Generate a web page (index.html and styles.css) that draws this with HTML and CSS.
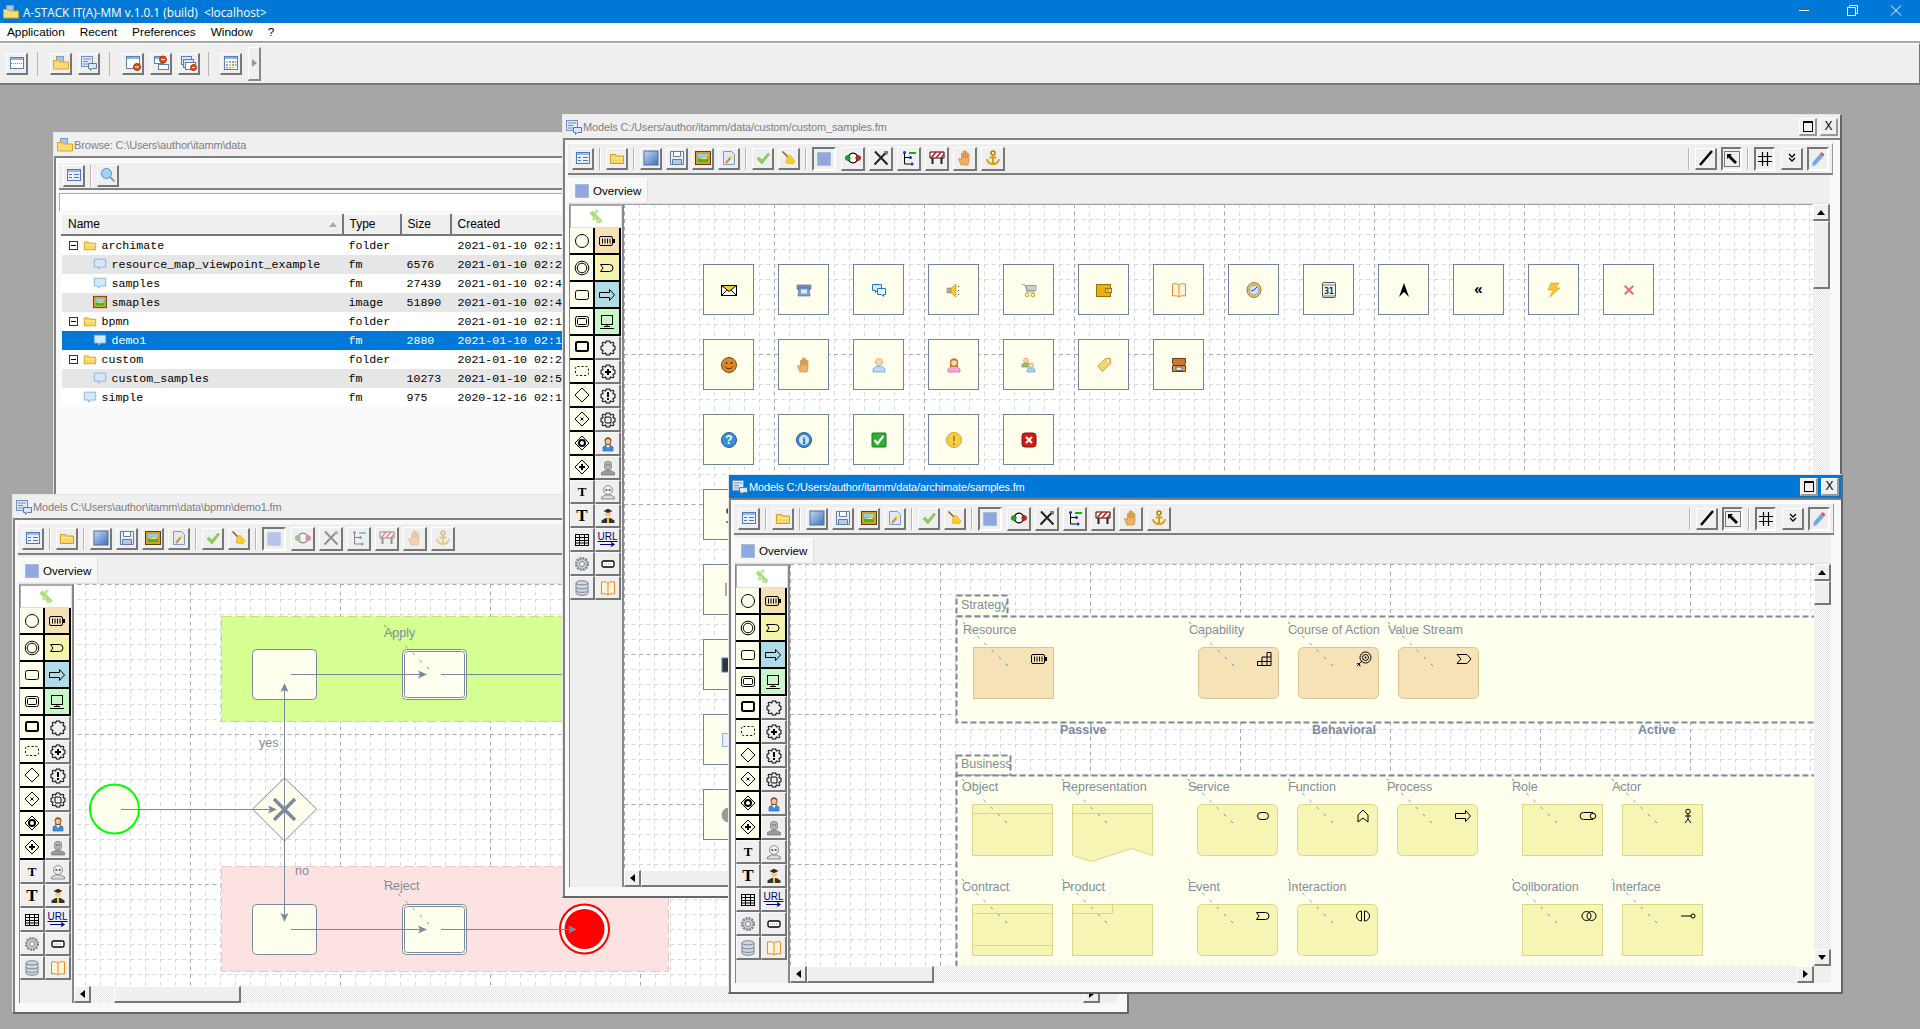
FILE: index.html
```html
<!DOCTYPE html>
<html lang="en">
<head>
<meta charset="utf-8">
<title>A-STACK IT(A)-MM</title>
<link rel="stylesheet" href="styles.css">
</head>
<body>
<svg class="defs" aria-hidden="true">
<defs>
<linearGradient id="bluegrad" x1="0" y1="0" x2="1" y2="1"><stop offset="0" stop-color="#c5d9f5"/><stop offset="1" stop-color="#3b72b8"/></linearGradient>
<pattern id="grid" patternUnits="userSpaceOnUse" width="150" height="150">
<g class="minor"><path d="M15.5 0v150M30.5 0v150M45.5 0v150M60.5 0v150M75.5 0v150M90.5 0v150M105.5 0v150M120.5 0v150M135.5 0v150"/><path d="M0 15.5h150M0 30.5h150M0 45.5h150M0 60.5h150M0 75.5h150M0 90.5h150M0 105.5h150M0 120.5h150M0 135.5h150"/></g>
<g class="major"><path d="M.5 0v150M0 .5h150"/></g>
</pattern>
<pattern id="grid-b" href="#grid" x="116"/>

<symbol id="t-win" viewBox="0 0 16 16"><rect x="1.500" y="2.500" width="13" height="11" fill="#fff" stroke="#5a7fb8"/><rect x="2" y="3" width="12" height="2" fill="#8fb0e0"/><path d="M2 8.500h12" stroke="#888" stroke-dasharray="1 1"/></symbol>
<symbol id="t-open" viewBox="0 0 16 16"><rect x="3.500" y="1.500" width="7" height="7" fill="#a9c4e8" stroke="#7f9bc5"/><path d="M.5 5.500h5l1 1.500h9v7h-15z" fill="#f8dc7a" stroke="#d9a520"/></symbol>
<symbol id="t-winb" viewBox="0 0 16 16"><rect x=".5" y="1.500" width="11" height="10" fill="#dfe8f5" stroke="#6f8fbf"/><path d="M2 4h8M2 6.500h5M2 9h5" stroke="#6f8fbf"/><path d="M7.500 8.500h8v5h-4l-2 2v-2h-2z" fill="#d6e8fb" stroke="#5b7c9e"/></symbol>
<symbol id="t-new1" viewBox="0 0 16 16"><rect x="1.500" y="1.500" width="13" height="12" fill="#fff" stroke="#5a7fb8"/><rect x="2" y="2" width="12" height="2" fill="#8fb0e0"/><circle cx="12" cy="12" r="3.500" fill="#d8531a" stroke="#9a3a10"/><path d="M10 12h4" stroke="#fff"/></symbol>
<symbol id="t-new2" viewBox="0 0 16 16"><rect x="1.500" y="1.500" width="9" height="7" fill="#fff" stroke="#5a7fb8"/><rect x="2" y="2" width="8" height="2" fill="#8fb0e0"/><rect x="5.500" y="9.500" width="10" height="5" fill="#fff" stroke="#5a7fb8"/><circle cx="10" cy="4.500" r="3.500" fill="#d8531a" stroke="#9a3a10"/><path d="M8 4.500h4" stroke="#fff"/></symbol>
<symbol id="t-new3" viewBox="0 0 16 16"><rect x=".5" y="1.500" width="10" height="8" fill="#dde7f5" stroke="#5a7fb8"/><rect x="2.500" y="4.500" width="10" height="8" fill="#dde7f5" stroke="#5a7fb8"/><rect x="4.500" y="7.500" width="10" height="7" fill="#fff" stroke="#5a7fb8"/><circle cx="12.500" cy="12.500" r="3" fill="#d8531a" stroke="#9a3a10"/><path d="M11 12.500h3" stroke="#fff"/></symbol>
<symbol id="t-cal" viewBox="0 0 16 16"><rect x="1.500" y="1.500" width="13" height="13" fill="#fff" stroke="#5a7fb8"/><rect x="2" y="2" width="12" height="2" fill="#8fb0e0"/><path d="M3 6h2v2H3z" fill="#e5c85a"/><path d="M6 6h2v2H6z" fill="#7fbf7f"/><path d="M9 6h2v2H9z" fill="#7fa7e5"/><path d="M12 6h1.500v2H12z" fill="#d89a5a"/><path d="M3 9h2v2H3z" fill="#7fa7e5"/><path d="M6 9h2v2H6z" fill="#e5c85a"/><path d="M9 9h2v2H9z" fill="#8fbf5f"/><path d="M12 9h1.500v2H12z" fill="#7fa7e5"/><path d="M3 12h2v1.500H3z" fill="#e57f7f"/><path d="M6 12h2v1.500H6z" fill="#7fbf7f"/><path d="M9 12h2v1.500H9z" fill="#e5c85a"/></symbol>
<symbol id="t-list" viewBox="0 0 16 16"><rect x="1.500" y="2.500" width="13" height="11" fill="#eaf1fb" stroke="#4f78bb"/><rect x="2" y="3" width="12" height="2" fill="#9fbbe5"/><path d="M3 7.500h3M8 7.500h5M3 10.500h3M8 10.500h5" stroke="#4f78bb"/></symbol>
<symbol id="t-search" viewBox="0 0 16 16"><circle cx="6.500" cy="6.500" r="5" fill="#a9d0f5" stroke="#4a90d0"/><path d="M10 10l4.500 4.500" stroke="#999" stroke-width="2"/></symbol>
<symbol id="t-folder" viewBox="0 0 16 16"><path d="M1.500 4.500h5l1 1.500h7v7.500h-13z" fill="#f8d860" stroke="#cf9c20"/><path d="M2 8h12" stroke="#fff2b0"/></symbol>
<symbol id="t-disk" viewBox="0 0 16 16"><rect x="1" y="1" width="14" height="14" fill="url(#bluegrad)" stroke="#4a6f9e"/></symbol>
<symbol id="t-floppy" viewBox="0 0 16 16"><path d="M1.500 1.500h13v13h-13z" fill="#e8eff8" stroke="#5a7fa8"/><path d="M4.500 1.500h7v5h-7z" fill="#fff" stroke="#5a7fa8"/><path d="M3.500 9.500h9v5h-9z" fill="#b7cbe5" stroke="#5a7fa8"/></symbol>
<symbol id="t-img" viewBox="0 0 16 16"><rect x=".5" y="1.500" width="15" height="13" fill="#d8a020" stroke="#5a4008"/><rect x="3" y="4" width="10" height="8" fill="#8fd0f0"/><path d="M3 9l3-2 3 2 4-2v5H3z" fill="#4caf30"/><path d="M5 8h7v1H5z" fill="#ffe65a"/></symbol>
<symbol id="t-wand" viewBox="0 0 16 16"><path d="M2.500 1.500h8l3 3v10h-11z" fill="#dfe9f7" stroke="#7f9bc5"/><path d="M5 13L10 7" stroke="#c8923a" stroke-width="2"/><path d="M10.500 4.500l1 1.500 1.500-.5-1 1.500.5 1.500-1.500-.5-1 1-.5-1.500-1.500-.5 1.500-1z" fill="#ffe060"/></symbol>
<symbol id="t-check" viewBox="0 0 16 16"><path d="M2 9l2-2 3 3 6-7 1.500 1.500L7 14z" fill="#8fcf5a" stroke="#6fae40" stroke-width=".5"/></symbol>
<symbol id="t-broom" viewBox="0 0 16 16"><path d="M1.500 1.500l6 6" stroke="#8a5a20" stroke-width="1.500"/><path d="M6 7l3-2 5 6-2 3-7-1z" fill="#f5cf2a" stroke="#c89f10" stroke-width=".5"/></symbol>
<symbol id="t-sel" viewBox="0 0 16 16"><rect x="1.500" y="1.500" width="13" height="13" fill="#8fa9e0" stroke="#a9bcd5"/></symbol>
<symbol id="t-seld" viewBox="0 0 16 16"><rect x="1.500" y="1.500" width="13" height="13" fill="#b7c5ec" stroke="#b0bfd8" stroke-dasharray="1 1"/></symbol>
<symbol id="t-ring" viewBox="0 0 16 16"><circle cx="8" cy="8" r="4.800" fill="#fff" stroke="#000" stroke-width="1.300"/><circle cx="2.800" cy="8" r="2.500" fill="#1fa81f" stroke="#0c5a0c" stroke-width=".5"/><circle cx="13.200" cy="8" r="2.500" fill="#d02020" stroke="#701010" stroke-width=".5"/></symbol>
<symbol id="t-tools" viewBox="0 0 16 16"><path d="M2 1.500l12.500 13M14 1.500L1.500 14.500" stroke="#222" stroke-width="2"/><path d="M11 1h4v3l-2 1z" fill="#778"/></symbol>
<symbol id="t-tree" viewBox="0 0 16 16"><path d="M3.500 2v12h6M3.500 7.500h6" stroke="#000" fill="none"/><circle cx="3.500" cy="2.500" r="1.500" fill="#1030c0"/><circle cx="9.500" cy="7.500" r="1.500" fill="#1030c0"/><circle cx="11" cy="14" r="1.500" fill="#1030c0"/><path d="M8 2h7v2H8z" fill="#10b020"/></symbol>
<symbol id="t-barrier" viewBox="0 0 16 16"><path d="M1 2h14v6H1z" fill="#fff" stroke="#300"/><path d="M1 8l5-6h2L3 8zM6 8l5-6h2L8 8zM11 8l4-5v2l-2 3z" fill="#e01010"/><path d="M3.500 8v6M12.500 8v6" stroke="#222" stroke-width="2"/></symbol>
<symbol id="t-hand" viewBox="0 0 16 16"><path d="M4 15L1.500 9l1-1 2 2V3.500L6 3v5h.5V1L8 .8V8h.5V1.500L10 2v6h.5V3.500l1.500.3V11l-1 4z" fill="#f0b060" stroke="#c08030" stroke-width=".6"/></symbol>
<symbol id="t-anchor" viewBox="0 0 16 16"><circle cx="8" cy="3" r="2" fill="none" stroke="#b08000" stroke-width="1.500"/><path d="M8 5v9M4.500 7.500h7M2 9c0 3 3 5 6 5s6-2 6-5" fill="none" stroke="#d8a010" stroke-width="2"/></symbol>
<symbol id="t-line" viewBox="0 0 16 16"><path d="M2 15L14 1" stroke="#000" stroke-width="2.500"/></symbol>
<symbol id="t-resize" viewBox="0 0 16 16"><rect x=".5" y=".5" width="15" height="15" fill="none" stroke="#000" stroke-dasharray="1 1"/><path d="M3 3h5l-1.500 1.500L13 11l-2 2-6.500-6.500L3 8z"/></symbol>
<symbol id="t-hash" viewBox="0 0 16 16"><path d="M5.500 1v14M10.500 1v14M1 5.500h14M1 10.500h14" stroke="#000" stroke-width="1.200"/></symbol>
<symbol id="t-chev" viewBox="0 0 16 16"><path d="M5 4l3 3 3-3M5 8l3 3 3-3" fill="none" stroke="#000" stroke-width="1.300"/></symbol>
<symbol id="t-pencil" viewBox="0 0 16 16"><path d="M3 11l7-8 3 2.500-7 8L2.500 15z" fill="#6fa8e8" stroke="#8fb6e0" stroke-width=".6"/><path d="M10 3l1.500-2 3 2.500L13 5.500z" fill="#e05050"/></symbol>
<symbol id="t-bubble" viewBox="0 0 16 16"><path d="M1.500 2.500h13v9h-6l-2 2.500v-2.500h-5z" fill="#d3e8fa" stroke="#7fb0d8"/></symbol>
<symbol id="t-link" viewBox="0 0 16 16"><path d="M3 3l10 10" stroke="#a8dc78" stroke-width="4"/><path d="M4.500 11l3.500-3.500M8.500 13.500l3-3M7 4l3-3" stroke="#bfe898" stroke-width="3"/></symbol>

<symbol id="p-c" viewBox="0 0 16 16"><circle cx="8" cy="8" r="6.500" fill="none" stroke="#000"/></symbol>
<symbol id="p-cc" viewBox="0 0 16 16"><circle cx="8" cy="8" r="6.800" fill="none" stroke="#000"/><circle cx="8" cy="8" r="4.800" fill="none" stroke="#000"/></symbol>
<symbol id="p-r" viewBox="0 0 16 16"><rect x="1.500" y="3.500" width="13" height="9" rx="2" fill="none" stroke="#000"/></symbol>
<symbol id="p-rr" viewBox="0 0 16 16"><rect x="1.500" y="2.500" width="13" height="10" rx="2" fill="none" stroke="#000"/><rect x="3.500" y="4.500" width="9" height="6" rx="1" fill="none" stroke="#000"/></symbol>
<symbol id="p-rt" viewBox="0 0 16 16"><rect x="2" y="3" width="12" height="9" rx="1.500" fill="none" stroke="#000" stroke-width="2"/></symbol>
<symbol id="p-rd" viewBox="0 0 16 16"><rect x="1.500" y="3.500" width="13" height="9" rx="2" fill="none" stroke="#000" stroke-dasharray="2 2"/></symbol>
<symbol id="p-d" viewBox="0 0 16 16"><path d="M8 1l7 7-7 7-7-7z" fill="none" stroke="#000"/></symbol>
<symbol id="p-dx" viewBox="0 0 16 16"><path d="M8 1l7 7-7 7-7-7z" fill="none" stroke="#000"/><path d="M6.500 6.500l3 3M9.500 6.500l-3 3" stroke="#000"/></symbol>
<symbol id="p-do" viewBox="0 0 16 16"><path d="M8 1l7 7-7 7-7-7z" fill="none" stroke="#000"/><circle cx="8" cy="8" r="3" fill="none" stroke="#000" stroke-width="2"/></symbol>
<symbol id="p-dp" viewBox="0 0 16 16"><path d="M8 1l7 7-7 7-7-7z" fill="none" stroke="#000"/><path d="M5 8h6M8 5v6" stroke="#000" stroke-width="2"/></symbol>
<symbol id="p-bat" viewBox="0 0 16 16"><rect x=".5" y="3.500" width="13" height="9" rx="1.500" fill="none" stroke="#000"/><path d="M14 6h2v4h-2z"/><path d="M3.500 5.500v5M6 5.500v5M8.500 5.500v5M11 5.500v5" stroke="#000"/></symbol>
<symbol id="p-evt" viewBox="0 0 16 16"><path d="M1.500 4.500h9a3.500 3.500 0 0 1 0 7h-9l2.500-3.500z" fill="none" stroke="#000"/></symbol>
<symbol id="p-arr" viewBox="0 0 16 16"><path d="M.5 5.500h10v-3l5 5.500-5 5.500v-3h-10z" fill="none" stroke="#000"/></symbol>
<symbol id="p-pc" viewBox="0 0 16 16"><rect x="2.500" y="1.500" width="11" height="9" fill="none" stroke="#000"/><path d="M8 10.500v2M1 14.500h14M5 12.500h6" stroke="#000"/></symbol>
<symbol id="p-g" viewBox="0 0 16 16"><path d="M6 1h4v2h1l2-1 1 1-1 2v1h2v4h-2v1l1 2-1 1-2-1h-1v2H6v-2H5l-2 1-1-1 1-2v-1H1V6h2V5L2 3l1-1 2 1h1z" fill="none" stroke="#000"/></symbol>
<symbol id="p-gp" viewBox="0 0 16 16"><path d="M6 1h4v2h1l2-1 1 1-1 2v1h2v4h-2v1l1 2-1 1-2-1h-1v2H6v-2H5l-2 1-1-1 1-2v-1H1V6h2V5L2 3l1-1 2 1h1z" fill="none" stroke="#000"/><path d="M5 8h6M8 5v6" stroke="#000" stroke-width="2"/></symbol>
<symbol id="p-ge" viewBox="0 0 16 16"><path d="M6 1h4v2h1l2-1 1 1-1 2v1h2v4h-2v1l1 2-1 1-2-1h-1v2H6v-2H5l-2 1-1-1 1-2v-1H1V6h2V5L2 3l1-1 2 1h1z" fill="none" stroke="#000"/><path d="M8 4v5M8 10v2" stroke="#000" stroke-width="2"/></symbol>
<symbol id="p-gz" viewBox="0 0 16 16"><path d="M6 1h4v2h1l2-1 1 1-1 2v1h2v4h-2v1l1 2-1 1-2-1h-1v2H6v-2H5l-2 1-1-1 1-2v-1H1V6h2V5L2 3l1-1 2 1h1z" fill="none" stroke="#000"/><path d="M5 5h5l1 1v5H6l-1-1z" fill="none" stroke="#000"/></symbol>
<symbol id="p-fem" viewBox="0 0 16 16"><path d="M3 15v-4l3-2h4l3 2v4z" fill="#3f8fe0" stroke="#245a9a" stroke-width=".6"/><path d="M6 9h4l-2 3z" fill="#fff"/><path d="M4.500 5c0-5 7-5 7 0l-1 4h-5z" fill="#8a4a1f"/><circle cx="8" cy="5.500" r="2.500" fill="#f4c69a"/></symbol>
<symbol id="p-rob" viewBox="0 0 16 16"><path d="M1.500 15v-2.500l4-2h5l4 2V15z" fill="#9a9a9a" stroke="#666" stroke-width=".6"/><rect x="4.500" y="1.500" width="7" height="8" rx="2.500" fill="#b5b5b5" stroke="#666" stroke-width=".6"/><path d="M6 5h1.500M8.500 5H10" stroke="#555"/></symbol>
<symbol id="p-sku" viewBox="0 0 16 16"><path d="M1.500 15v-2l4-2h5l4 2v2z" fill="#ddd" stroke="#666" stroke-width=".7"/><circle cx="8" cy="6" r="4.500" fill="#eee" stroke="#666" stroke-width=".7"/><circle cx="6.300" cy="6" r="1.100" fill="#555"/><circle cx="9.700" cy="6" r="1.100" fill="#555"/></symbol>
<symbol id="p-off" viewBox="0 0 16 16"><path d="M1.500 15v-2.500l4-2.500h5l4 2.500V15z" fill="#333"/><path d="M7 10h2v5H7z" fill="#eec040"/><circle cx="8" cy="6" r="3" fill="#f4c69a"/><path d="M3.500 3L8 .8 12.500 3 8 5z" fill="#3a2a10"/></symbol>
<symbol id="p-tbl" viewBox="0 0 16 16"><rect x="1.500" y="2.500" width="13" height="11" fill="none" stroke="#000"/><path d="M1.500 5.500h13M1.500 8.500h13M1.500 11h13M5.500 2.500v11M10.500 2.500v11" stroke="#000"/></symbol>
<symbol id="p-pill" viewBox="0 0 16 16"><rect x="2" y="5" width="12" height="6" rx="1.500" fill="#fff" stroke="#000" stroke-width="1.300"/><path d="M4 8h8" stroke="#999" stroke-dasharray="1 1"/></symbol>
<symbol id="p-cog" viewBox="0 0 16 16"><circle cx="8" cy="8" r="5.800" fill="#ccd0d6" stroke="#7f8590" stroke-width="2.500" stroke-dasharray="2 1"/><circle cx="8" cy="8" r="2.500" fill="#f2f2f2" stroke="#7f8590"/></symbol>
<symbol id="p-db" viewBox="0 0 16 16"><path d="M2 3c0-3 12-3 12 0v10c0 3-12 3-12 0z" fill="#cdd8e4" stroke="#7f8590"/><path d="M2 3c0 2.500 12 2.500 12 0M2 7c0 2.500 12 2.500 12 0M2 10.500c0 2.500 12 2.500 12 0" fill="none" stroke="#7f8590"/></symbol>
<symbol id="p-book" viewBox="0 0 16 16"><path d="M8 3C6.500 1.500 3 1.500 1.500 2v12c1.500-.5 5-.5 6.500 1 1.500-1.500 5-1.500 6.500-1V2C13 1.500 9.500 1.500 8 3zM8 3v12" fill="#fff3dc" stroke="#e08f20"/></symbol>
<symbol id="p-arrowline" viewBox="0 0 16 5"><path d="M0 2.500h14M11 .5l3 2-3 2" fill="none" stroke="#000080" stroke-width="1.200"/></symbol>

<symbol id="c-env" viewBox="0 0 16 16"><rect x=".5" y="3.500" width="15" height="10" fill="#fff" stroke="#000"/><path d="M.5 3.500L8 9.500l7.500-6z" fill="#f5c92e" stroke="#000"/><path d="M.5 13.500L6 8M15.500 13.500L10 8" stroke="#000"/></symbol>
<symbol id="c-tel" viewBox="0 0 16 16"><path d="M1 3h14v4l-2 1V6H3v2L1 7z" fill="#6e93bf" stroke="#456a96" stroke-width=".6"/><path d="M3 6h10l1 8H2z" fill="#7ca0c8" stroke="#456a96" stroke-width=".6"/><rect x="5" y="7.500" width="6" height="4" fill="#dfe9f5"/></symbol>
<symbol id="c-spk" viewBox="0 0 16 16"><path d="M1.500 2.500h9v6h-4l-2 2v-2h-3z" fill="#d5eafc" stroke="#1d78c8"/><path d="M6.500 6.500h8v6h-2v2l-2-2h-4z" fill="#eef7ff" stroke="#1d78c8"/></symbol>
<symbol id="c-snd" viewBox="0 0 16 16"><path d="M1 6h4v5H1z" fill="#aaa" stroke="#777" stroke-width=".5"/><path d="M5 6l5-4v13l-5-4z" fill="#f8c830" stroke="#b88a10" stroke-width=".6"/><path d="M12.500 4v1M12.500 8v1M12.500 12v1" stroke="#333"/></symbol>
<symbol id="c-cart" viewBox="0 0 16 16"><path d="M1 2l3 1 2 7h8" fill="none" stroke="#999"/><path d="M5 3.500h10v5H6.500z" fill="#f3f3f3" stroke="#999"/><path d="M7 4v4M9 4v4M11 4v4M13 4v4" stroke="#aaa"/><circle cx="6" cy="13" r="1.800" fill="#fff3c0" stroke="#d8a010"/><circle cx="12" cy="13" r="1.800" fill="#fff3c0" stroke="#d8a010"/></symbol>
<symbol id="c-wal" viewBox="0 0 16 16"><rect x=".5" y="2.500" width="14" height="12" fill="#e9b010" stroke="#9a7205"/><rect x="9.500" y="6.500" width="6" height="4" fill="#f7d050" stroke="#9a7205"/><circle cx="12" cy="8.500" r=".8" fill="#9a7205"/></symbol>
<symbol id="c-clk" viewBox="0 0 16 16"><ellipse cx="8" cy="8" rx="7" ry="7.400" fill="#f3d070" stroke="#a86e10"/><circle cx="8" cy="8" r="5" fill="#cfe0ff" stroke="#7a90c0"/><path d="M8 8l3-3M8 8l-3 1" stroke="#345"/></symbol>
<symbol id="c-cal" viewBox="0 0 16 16"><rect x="1.500" y=".5" width="13" height="15" rx="1" fill="#eee" stroke="#555"/><path d="M2 3h12M2 14h12" stroke="#888"/><text x="8" y="11.500" class="cal-t">31</text></symbol>
<symbol id="c-head" viewBox="0 0 16 16"><path d="M8 1l5 14-5-5-5 5z"/></symbol>
<symbol id="c-bolt" viewBox="0 0 16 16"><path d="M5 1h8l-3 5h4L4 15l3-7H2z" fill="#f5c83a" stroke="#d8a520" stroke-width=".7"/></symbol>
<symbol id="c-x" viewBox="0 0 16 16"><path d="M3 4.500L4.500 3 8 6.500 11.500 3 13 4.500 9.500 8l3.500 3.500-1.500 1.500L8 9.500 4.500 13 3 11.500 6.500 8z" fill="#e87070"/></symbol>
<symbol id="c-smile" viewBox="0 0 16 16"><circle cx="8" cy="8" r="7.500" fill="#e2862a" stroke="#7a4510"/><circle cx="5.500" cy="6" r="1" fill="#432"/><circle cx="10.500" cy="6" r="1" fill="#432"/><path d="M4 9.500c2 3 6 3 8 0" fill="none" stroke="#432"/></symbol>
<symbol id="c-user" viewBox="0 0 16 16"><path d="M2 15v-3l3-2.500h6l3 2.500v3z" fill="#bcdcfc" stroke="#5a9ad8" stroke-width=".7"/><circle cx="8" cy="5" r="3.500" fill="#fad7a8" stroke="#d8a060" stroke-width=".7"/></symbol>
<symbol id="c-wom" viewBox="0 0 16 16"><path d="M2 15v-3l3-2.500h6l3 2.500v3z" fill="#f6a8d8" stroke="#d060a0" stroke-width=".7"/><path d="M4 10V5c0-5 8-5 8 0v5z" fill="#bf7a30"/><circle cx="8" cy="6" r="2.800" fill="#fad7a8"/></symbol>
<symbol id="c-grp" viewBox="0 0 16 16"><path d="M1 10V7.500L3 6h4l2 1.500V10z" fill="#8bc870" stroke="#4f9040" stroke-width=".6"/><circle cx="5" cy="3.500" r="2.500" fill="#fad7a8" stroke="#c89060" stroke-width=".6"/><path d="M6 15v-2.500L8 11h4l2 1.500V15z" fill="#a8d0f8" stroke="#5a9ad8" stroke-width=".6"/><circle cx="10" cy="8.500" r="2.500" fill="#fad7a8" stroke="#c89060" stroke-width=".6"/></symbol>
<symbol id="c-tag" viewBox="0 0 16 16"><path d="M1.500 9l8-7.500h5v5L6.500 14.500z" fill="#f5d470" stroke="#d8a530"/><circle cx="12" cy="4" r="1" fill="#fff"/></symbol>
<symbol id="c-chest" viewBox="0 0 16 16"><path d="M1.500 1.500h13v5l-2 2h-9l-2-2z" fill="#c87a30" stroke="#6a3a10"/><path d="M1.500 8.500h13v6h-13z" fill="#e09a50" stroke="#6a3a10"/><rect x="5" y="10" width="6" height="3.500" fill="#e8e8e8" stroke="#666"/></symbol>
<symbol id="c-q" viewBox="0 0 16 16"><circle cx="8" cy="8" r="7.500" fill="#3d8ed8" stroke="#1f5a96"/><text x="8" y="12.200" class="badge-t">?</text></symbol>
<symbol id="c-i" viewBox="0 0 16 16"><circle cx="8" cy="8" r="7.500" fill="#3d8ed8" stroke="#1f5a96"/><circle cx="8" cy="8" r="5" fill="#cfe6fb"/><text x="8" y="12" class="badge-i">i</text></symbol>
<symbol id="c-ok" viewBox="0 0 16 16"><rect x="1" y="1" width="14" height="14" rx="1" fill="#30b030" stroke="#1a7a1a"/><path d="M3.500 8l3 3.500L12.500 4" fill="none" stroke="#fff" stroke-width="2.200"/></symbol>
<symbol id="c-warn" viewBox="0 0 16 16"><circle cx="8" cy="8" r="7.500" fill="#f8d048" stroke="#d8a020"/><path d="M8 3.500v6M8 11v2" stroke="#d08010" stroke-width="2"/></symbol>
<symbol id="c-err" viewBox="0 0 16 16"><rect x="1" y="1" width="14" height="14" rx="3" fill="#d81818" stroke="#801010"/><path d="M5 5l6 6M11 5l-6 6" stroke="#fff" stroke-width="2"/></symbol>
<symbol id="c-pin" viewBox="0 0 16 16"><circle cx="8" cy="4" r="3" fill="#555"/><path d="M8 7v8M5 15h6" stroke="#000"/></symbol>
<symbol id="c-blk" viewBox="0 0 16 16"><rect x="1" y="1" width="14" height="14" fill="#333" stroke="#5a7fc8"/></symbol>
<symbol id="c-doc" viewBox="0 0 16 16"><rect x="1.500" y="1.500" width="13" height="13" fill="#e8f0fa" stroke="#8fb0d8"/></symbol>
<symbol id="c-ball" viewBox="0 0 16 16"><circle cx="8" cy="8" r="7.500" fill="#999"/></symbol>
<symbol id="c-bar" viewBox="0 0 16 16"><rect x="4" y="1" width="2" height="13" fill="#aaa"/></symbol>

<symbol id="a-stair" viewBox="0 0 16 16"><path d="M11 1.500h4v13H1.500v-4H6V6h5zM6 10.500h9M11 6h4M6 10.500v4M11 6v8.500" fill="none" stroke="#000"/></symbol>
<symbol id="a-target" viewBox="0 0 16 16"><circle cx="9.500" cy="6.500" r="5.500" fill="none" stroke="#000"/><circle cx="9.500" cy="6.500" r="3" fill="none" stroke="#000"/><circle cx="9.500" cy="6.500" r="1"/><path d="M6 10l-5 5M1 12.500L3.500 13 4 15.500" fill="none" stroke="#000"/></symbol>
<symbol id="a-chev" viewBox="0 0 16 16"><path d="M1 3.500h10l4 4.500-4 4.500H1l4-4.500z" fill="none" stroke="#000"/></symbol>
<symbol id="a-pill" viewBox="0 0 16 16"><rect x="2.500" y="4.500" width="11" height="7" rx="3.500" fill="none" stroke="#000"/></symbol>
<symbol id="a-func" viewBox="0 0 16 16"><path d="M8 2l5 5v7l-5-4-5 4V7z" fill="none" stroke="#000"/></symbol>
<symbol id="a-role" viewBox="0 0 16 16"><path d="M13 4.500H3.500a3.500 3.500 0 0 0 0 7H13" fill="none" stroke="#000"/><circle cx="13" cy="8" r="2.800" fill="none" stroke="#000"/></symbol>
<symbol id="a-actor" viewBox="0 0 16 16"><circle cx="8" cy="3.500" r="2.300" fill="none" stroke="#000"/><path d="M8 6v5M5 8h6M5 15l3-4 3 4" fill="none" stroke="#000"/></symbol>
<symbol id="a-int" viewBox="0 0 16 16"><path d="M6.500 3a5 5 0 0 0 0 10zM9.500 3a5 5 0 0 1 0 10z" fill="none" stroke="#000"/></symbol>
<symbol id="a-coll" viewBox="0 0 16 16"><circle cx="5.500" cy="8" r="4.500" fill="none" stroke="#000"/><circle cx="10.500" cy="8" r="4.500" fill="none" stroke="#000"/></symbol>
<symbol id="a-iface" viewBox="0 0 16 16"><path d="M1 8h10" stroke="#000"/><circle cx="13" cy="8" r="2" fill="none" stroke="#000"/></symbol>
</defs>
</svg>

<header class="app-title">
<svg class="ic app-logo"><use href="#t-open"/></svg>
<span class="app-name">A-STACK IT(A)-MM v.1.0.1 (build)&nbsp; &lt;localhost&gt;</span>
<span class="sys"><svg viewBox="0 0 46 23"><path d="M18 10.500h10" stroke="#fff"/></svg></span>
<span class="sys"><svg viewBox="0 0 46 23"><path d="M20.500 7.500h8v8h-8zM22.500 7.500v-2h8v8h-2" fill="none" stroke="#fff"/></svg></span>
<span class="sys"><svg viewBox="0 0 46 23"><path d="M18 5.500l10 10M28 5.500l-10 10" stroke="#fff"/></svg></span>
</header>
<nav class="menu"><span>Application</span><span>Recent</span><span>Preferences</span><span>Window</span><span>?</span></nav>
<div class="main-tb">
<span class="btn"><svg class="ic"><use href="#t-win"/></svg></span><i class="sep sep-a"></i>
<span class="btn"><svg class="ic"><use href="#t-open"/></svg></span>
<span class="btn"><svg class="ic"><use href="#t-winb"/></svg></span><i class="sep sep-a"></i>
<span class="btn"><svg class="ic"><use href="#t-new1"/></svg></span>
<span class="btn"><svg class="ic"><use href="#t-new2"/></svg></span>
<span class="btn"><svg class="ic"><use href="#t-new3"/></svg></span><i class="sep sep-b"></i>
<span class="btn"><svg class="ic"><use href="#t-cal"/></svg></span>
<span class="grip"><i class="tri-r"></i></span>
</div>

<main class="desktop">

<section class="win win-browse">
<div class="win-title"><svg class="ic"><use href="#t-open"/></svg><span>Browse: C:\Users\author\itamm\data</span></div>
<div class="win-body">
<div class="tb tb-browse">
<span class="btn"><svg class="ic"><use href="#t-list"/></svg></span><i class="sep"></i>
<span class="btn"><svg class="ic"><use href="#t-search"/></svg></span>
</div>
<div class="field"></div>
<table class="files">
<colgroup><col class="c-name"><col class="c-type"><col class="c-size"><col class="c-date"></colgroup>
<thead><tr><th><span class="th-name">Name<i class="sort"></i></span></th><th>Type</th><th>Size</th><th>Created</th></tr></thead>
<tbody>
<tr><td><span class="nm lv0"><i class="tog"></i><svg class="fi"><use href="#t-folder"/></svg>archimate</span></td><td>folder</td><td></td><td>2021-01-10 02:1</td></tr>
<tr class="alt"><td><span class="nm lv1"><svg class="fi"><use href="#t-bubble"/></svg>resource_map_viewpoint_example</span></td><td>fm</td><td>6576</td><td>2021-01-10 02:2</td></tr>
<tr><td><span class="nm lv1"><svg class="fi"><use href="#t-bubble"/></svg>samples</span></td><td>fm</td><td>27439</td><td>2021-01-10 02:4</td></tr>
<tr class="alt"><td><span class="nm lv1"><svg class="fi"><use href="#t-img"/></svg>smaples</span></td><td>image</td><td>51890</td><td>2021-01-10 02:4</td></tr>
<tr><td><span class="nm lv0"><i class="tog"></i><svg class="fi"><use href="#t-folder"/></svg>bpmn</span></td><td>folder</td><td></td><td>2021-01-10 02:1</td></tr>
<tr class="sel"><td><span class="nm lv1"><svg class="fi"><use href="#t-bubble"/></svg>demo1</span></td><td>fm</td><td>2880</td><td>2021-01-10 02:1</td></tr>
<tr><td><span class="nm lv0"><i class="tog"></i><svg class="fi"><use href="#t-folder"/></svg>custom</span></td><td>folder</td><td></td><td>2021-01-10 02:2</td></tr>
<tr class="alt"><td><span class="nm lv1"><svg class="fi"><use href="#t-bubble"/></svg>custom_samples</span></td><td>fm</td><td>10273</td><td>2021-01-10 02:5</td></tr>
<tr><td><span class="nm lv2"><svg class="fi"><use href="#t-bubble"/></svg>simple</span></td><td>fm</td><td>975</td><td>2020-12-16 02:1</td></tr>
</tbody>
</table>
</div>
</section>

<section class="win win-bpmn">
<div class="win-title"><svg class="ic"><use href="#t-winb"/></svg><span>Models C:\Users\author\itamm\data\bpmn\demo1.fm</span></div>
<div class="win-body">
<div class="tb">
<span class="btn"><svg class="ic"><use href="#t-list"/></svg></span><i class="sep"></i>
<span class="btn"><svg class="ic"><use href="#t-folder"/></svg></span><i class="sep"></i>
<span class="btn"><svg class="ic"><use href="#t-disk"/></svg></span>
<span class="btn"><svg class="ic"><use href="#t-floppy"/></svg></span>
<span class="btn"><svg class="ic"><use href="#t-img"/></svg></span>
<span class="btn"><svg class="ic"><use href="#t-wand"/></svg></span><i class="sep"></i>
<span class="btn"><svg class="ic"><use href="#t-check"/></svg></span>
<span class="btn"><svg class="ic"><use href="#t-broom"/></svg></span><i class="sep"></i>
<span class="btn btn-on"><svg class="ic"><use href="#t-seld"/></svg></span>
<span class="btn btn-w dim"><svg class="ic"><use href="#t-ring"/></svg></span>
<span class="btn btn-w dim"><svg class="ic"><use href="#t-tools"/></svg></span>
<span class="btn btn-w dim"><svg class="ic"><use href="#t-tree"/></svg></span>
<span class="btn btn-w dim"><svg class="ic"><use href="#t-barrier"/></svg></span>
<span class="btn btn-w dim"><svg class="ic"><use href="#t-hand"/></svg></span>
<span class="btn btn-w dim"><svg class="ic"><use href="#t-anchor"/></svg></span>
</div>
<div class="tabs"><span class="tab"><svg class="ic"><use href="#t-sel"/></svg>Overview</span></div>
<div class="work">
<div class="palette">
<div class="pal-top"><svg class="ic"><use href="#t-link"/></svg></div>
<div class="pal-grid">
<span class="p y"><svg class="ic"><use href="#p-c"/></svg></span><span class="p tan"><svg class="ic"><use href="#p-bat"/></svg></span>
<span class="p y"><svg class="ic"><use href="#p-cc"/></svg></span><span class="p yel"><svg class="ic"><use href="#p-evt"/></svg></span>
<span class="p y"><svg class="ic"><use href="#p-r"/></svg></span><span class="p blu"><svg class="ic"><use href="#p-arr"/></svg></span>
<span class="p y"><svg class="ic"><use href="#p-rr"/></svg></span><span class="p grn"><svg class="ic"><use href="#p-pc"/></svg></span>
<span class="p y"><svg class="ic"><use href="#p-rt"/></svg></span><span class="p"><svg class="ic"><use href="#p-g"/></svg></span>
<span class="p y"><svg class="ic"><use href="#p-rd"/></svg></span><span class="p"><svg class="ic"><use href="#p-gp"/></svg></span>
<span class="p y"><svg class="ic"><use href="#p-d"/></svg></span><span class="p"><svg class="ic"><use href="#p-ge"/></svg></span>
<span class="p y"><svg class="ic"><use href="#p-dx"/></svg></span><span class="p"><svg class="ic"><use href="#p-gz"/></svg></span>
<span class="p y"><svg class="ic"><use href="#p-do"/></svg></span><span class="p"><svg class="ic"><use href="#p-fem"/></svg></span>
<span class="p y"><svg class="ic"><use href="#p-dp"/></svg></span><span class="p"><svg class="ic"><use href="#p-rob"/></svg></span>
<span class="p t-reg">T</span><span class="p"><svg class="ic"><use href="#p-sku"/></svg></span>
<span class="p t-big">T</span><span class="p"><svg class="ic"><use href="#p-off"/></svg></span>
<span class="p"><svg class="ic"><use href="#p-tbl"/></svg></span><span class="p url"><span class="url-t">URL</span><svg class="url-a"><use href="#p-arrowline"/></svg></span>
<span class="p"><svg class="ic"><use href="#p-cog"/></svg></span><span class="p"><svg class="ic"><use href="#p-pill"/></svg></span>
<span class="p"><svg class="ic"><use href="#p-db"/></svg></span><span class="p"><svg class="ic"><use href="#p-book"/></svg></span>
</div>
</div>
<div class="view">
<div class="canvas"><svg class="diagram">
<rect width="100%" height="100%" fill="#fff"/><rect width="100%" height="100%" fill="url(#grid-b)"/>
<g transform="translate(-74 -584)">
<rect class="lane-g" x="221.500" y="616.500" width="447" height="105"/>
<rect class="lane-r" x="221.500" y="866.500" width="447" height="105"/>
<rect class="task" x="252.500" y="649.500" width="64" height="50" rx="4"/>
<rect class="task" x="402.500" y="649.500" width="64" height="50" rx="4"/><rect class="task" x="404.500" y="651.500" width="60" height="46" rx="3"/>
<rect class="task" x="252.500" y="904.500" width="64" height="50" rx="4"/>
<rect class="task" x="402.500" y="904.500" width="64" height="50" rx="4"/><rect class="task" x="404.500" y="906.500" width="60" height="46" rx="3"/>
<circle class="start" cx="114.500" cy="809" r="24.500"/>
<path class="task" d="M284.500 778l32 31-32 32-32-32z"/>
<circle class="end-o" cx="584.500" cy="929" r="24.500"/><circle class="end-i" cx="584.500" cy="929" r="20"/>
<path class="xmark" d="M274 799l21 21M295 799l-21 21"/>
<path class="conn" d="M121 809.500h155M284.500 809V690M284.500 809V915M291 674.500h130M441 674.500h228M291 929.500h130M441 929.500h130"/>
<path class="head" d="M277 809.500l-9-4 2 4-2 4zM284.500 683l-4 9 4-2 4 2zM284.500 922l-4-9 4 2 4-2zM427 674.500l-9-4 2 4-2 4zM427 929.500l-9-4 2 4-2 4zM577 929.500l-9-4 2 4-2 4z"/>
<path class="hint" d="M384 625l45 44M384 880l45 44"/>
<text class="lbl" x="384" y="637">Apply</text><text class="lbl" x="384" y="890">Reject</text>
<text class="lbl" x="259" y="747">yes</text><text class="lbl" x="295" y="875">no</text>
</g></svg></div>
<div class="vs"><span class="sb-b"><i class="tri-u"></i></span><span class="track"></span><span class="sb-b"><i class="tri-d"></i></span></div>
<div class="hs"><span class="sb-b"><i class="tri-l"></i></span><span class="track gap-23"></span><span class="thumb thumb-127"></span><span class="track"></span><span class="sb-b"><i class="tri-rb"></i></span></div>
<div class="corner"></div>
</div>
</div>
</div>
</section>

<section class="win win-custom">
<div class="win-title"><svg class="ic"><use href="#t-winb"/></svg><span>Models C:/Users/author/itamm/data/custom/custom_samples.fm</span><span class="wbtns"><span class="wb"><i class="wmax"></i></span><span class="wb">X</span></span></div>
<div class="win-body">
<div class="tb">
<span class="btn"><svg class="ic"><use href="#t-list"/></svg></span><i class="sep"></i>
<span class="btn"><svg class="ic"><use href="#t-folder"/></svg></span><i class="sep"></i>
<span class="btn"><svg class="ic"><use href="#t-disk"/></svg></span>
<span class="btn"><svg class="ic"><use href="#t-floppy"/></svg></span>
<span class="btn"><svg class="ic"><use href="#t-img"/></svg></span>
<span class="btn"><svg class="ic"><use href="#t-wand"/></svg></span><i class="sep"></i>
<span class="btn"><svg class="ic"><use href="#t-check"/></svg></span>
<span class="btn"><svg class="ic"><use href="#t-broom"/></svg></span><i class="sep"></i>
<span class="btn btn-on"><svg class="ic"><use href="#t-sel"/></svg></span>
<span class="btn btn-w"><svg class="ic"><use href="#t-ring"/></svg></span>
<span class="btn btn-w"><svg class="ic"><use href="#t-tools"/></svg></span>
<span class="btn btn-w"><svg class="ic"><use href="#t-tree"/></svg></span>
<span class="btn btn-w"><svg class="ic"><use href="#t-barrier"/></svg></span>
<span class="btn btn-w"><svg class="ic"><use href="#t-hand"/></svg></span>
<span class="btn btn-w"><svg class="ic"><use href="#t-anchor"/></svg></span>
<i class="sep sep-end"></i>
<span class="btn"><svg class="ic"><use href="#t-line"/></svg></span>
<span class="btn btn-on btn-n"><svg class="ic"><use href="#t-resize"/></svg></span><i class="sep"></i>
<span class="btn btn-on btn-n btn-h"><svg class="ic"><use href="#t-hash"/></svg></span>
<span class="btn"><svg class="ic"><use href="#t-chev"/></svg></span>
<span class="btn btn-on btn-p"><svg class="ic"><use href="#t-pencil"/></svg></span>
</div>
<div class="tabs"><span class="tab"><svg class="ic"><use href="#t-sel"/></svg>Overview</span></div>
<div class="work">
<div class="palette">
<div class="pal-top"><svg class="ic"><use href="#t-link"/></svg></div>
<div class="pal-grid">
<span class="p y"><svg class="ic"><use href="#p-c"/></svg></span><span class="p tan"><svg class="ic"><use href="#p-bat"/></svg></span>
<span class="p y"><svg class="ic"><use href="#p-cc"/></svg></span><span class="p yel"><svg class="ic"><use href="#p-evt"/></svg></span>
<span class="p y"><svg class="ic"><use href="#p-r"/></svg></span><span class="p blu"><svg class="ic"><use href="#p-arr"/></svg></span>
<span class="p y"><svg class="ic"><use href="#p-rr"/></svg></span><span class="p grn"><svg class="ic"><use href="#p-pc"/></svg></span>
<span class="p y"><svg class="ic"><use href="#p-rt"/></svg></span><span class="p"><svg class="ic"><use href="#p-g"/></svg></span>
<span class="p y"><svg class="ic"><use href="#p-rd"/></svg></span><span class="p"><svg class="ic"><use href="#p-gp"/></svg></span>
<span class="p y"><svg class="ic"><use href="#p-d"/></svg></span><span class="p"><svg class="ic"><use href="#p-ge"/></svg></span>
<span class="p y"><svg class="ic"><use href="#p-dx"/></svg></span><span class="p"><svg class="ic"><use href="#p-gz"/></svg></span>
<span class="p y"><svg class="ic"><use href="#p-do"/></svg></span><span class="p"><svg class="ic"><use href="#p-fem"/></svg></span>
<span class="p y"><svg class="ic"><use href="#p-dp"/></svg></span><span class="p"><svg class="ic"><use href="#p-rob"/></svg></span>
<span class="p t-reg">T</span><span class="p"><svg class="ic"><use href="#p-sku"/></svg></span>
<span class="p t-big">T</span><span class="p"><svg class="ic"><use href="#p-off"/></svg></span>
<span class="p"><svg class="ic"><use href="#p-tbl"/></svg></span><span class="p url"><span class="url-t">URL</span><svg class="url-a"><use href="#p-arrowline"/></svg></span>
<span class="p"><svg class="ic"><use href="#p-cog"/></svg></span><span class="p"><svg class="ic"><use href="#p-pill"/></svg></span>
<span class="p"><svg class="ic"><use href="#p-db"/></svg></span><span class="p"><svg class="ic"><use href="#p-book"/></svg></span>
</div>
</div>
<div class="view">
<div class="canvas canvas-cards">
<svg class="gridback"><rect width="100%" height="100%" fill="url(#grid)"/></svg>
<div class="cards">
<div class="card"><svg class="ic"><use href="#c-env"/></svg></div><div class="card"><svg class="ic"><use href="#c-tel"/></svg></div><div class="card"><svg class="ic"><use href="#c-spk"/></svg></div><div class="card"><svg class="ic"><use href="#c-snd"/></svg></div><div class="card"><svg class="ic"><use href="#c-cart"/></svg></div><div class="card"><svg class="ic"><use href="#c-wal"/></svg></div><div class="card"><svg class="ic"><use href="#p-book"/></svg></div><div class="card"><svg class="ic"><use href="#c-clk"/></svg></div><div class="card"><svg class="ic"><use href="#c-cal"/></svg></div><div class="card"><svg class="ic"><use href="#c-head"/></svg></div><div class="card chev">«</div><div class="card"><svg class="ic"><use href="#c-bolt"/></svg></div><div class="card"><svg class="ic"><use href="#c-x"/></svg></div>
<div class="card"><svg class="ic"><use href="#c-smile"/></svg></div><div class="card"><svg class="ic"><use href="#t-hand"/></svg></div><div class="card"><svg class="ic"><use href="#c-user"/></svg></div><div class="card"><svg class="ic"><use href="#c-wom"/></svg></div><div class="card"><svg class="ic"><use href="#c-grp"/></svg></div><div class="card"><svg class="ic"><use href="#c-tag"/></svg></div><div class="card"><svg class="ic"><use href="#c-chest"/></svg></div><div class="cell-skip"></div>
<div class="card"><svg class="ic"><use href="#c-q"/></svg></div><div class="card"><svg class="ic"><use href="#c-i"/></svg></div><div class="card"><svg class="ic"><use href="#c-ok"/></svg></div><div class="card"><svg class="ic"><use href="#c-warn"/></svg></div><div class="card"><svg class="ic"><use href="#c-err"/></svg></div><div class="cell-skip"></div>
<div class="card"><svg class="ic"><use href="#c-pin"/></svg></div><div class="cell-skip"></div>
<div class="card"><svg class="ic"><use href="#c-bar"/></svg></div><div class="cell-skip"></div>
<div class="card"><svg class="ic"><use href="#c-blk"/></svg></div><div class="cell-skip"></div>
<div class="card"><svg class="ic"><use href="#c-doc"/></svg></div><div class="cell-skip"></div>
<div class="card"><svg class="ic"><use href="#c-ball"/></svg></div>
</div>
</div>
<div class="vs"><span class="sb-b"><i class="tri-u"></i></span><span class="thumb-v thumb-68"></span><span class="track"></span><span class="sb-b"><i class="tri-d"></i></span></div>
<div class="hs"><span class="sb-b"><i class="tri-l"></i></span><span class="thumb thumb-500"></span><span class="track"></span><span class="sb-b"><i class="tri-rb"></i></span></div>
<div class="corner"></div>
</div>
</div>
</div>
</section>

<section class="win win-samples">
<div class="win-title on"><svg class="ic"><use href="#t-winb"/></svg><span>Models C:/Users/author/itamm/data/archimate/samples.fm</span><span class="wbtns"><span class="wb"><i class="wmax"></i></span><span class="wb">X</span></span></div>
<div class="win-body">
<div class="tb">
<span class="btn"><svg class="ic"><use href="#t-list"/></svg></span><i class="sep"></i>
<span class="btn"><svg class="ic"><use href="#t-folder"/></svg></span><i class="sep"></i>
<span class="btn"><svg class="ic"><use href="#t-disk"/></svg></span>
<span class="btn"><svg class="ic"><use href="#t-floppy"/></svg></span>
<span class="btn"><svg class="ic"><use href="#t-img"/></svg></span>
<span class="btn"><svg class="ic"><use href="#t-wand"/></svg></span><i class="sep"></i>
<span class="btn"><svg class="ic"><use href="#t-check"/></svg></span>
<span class="btn"><svg class="ic"><use href="#t-broom"/></svg></span><i class="sep"></i>
<span class="btn btn-on"><svg class="ic"><use href="#t-sel"/></svg></span>
<span class="btn btn-w"><svg class="ic"><use href="#t-ring"/></svg></span>
<span class="btn btn-w"><svg class="ic"><use href="#t-tools"/></svg></span>
<span class="btn btn-w"><svg class="ic"><use href="#t-tree"/></svg></span>
<span class="btn btn-w"><svg class="ic"><use href="#t-barrier"/></svg></span>
<span class="btn btn-w"><svg class="ic"><use href="#t-hand"/></svg></span>
<span class="btn btn-w"><svg class="ic"><use href="#t-anchor"/></svg></span>
<i class="sep sep-end"></i>
<span class="btn"><svg class="ic"><use href="#t-line"/></svg></span>
<span class="btn btn-on btn-n"><svg class="ic"><use href="#t-resize"/></svg></span><i class="sep"></i>
<span class="btn btn-on btn-n btn-h"><svg class="ic"><use href="#t-hash"/></svg></span>
<span class="btn"><svg class="ic"><use href="#t-chev"/></svg></span>
<span class="btn btn-on btn-p"><svg class="ic"><use href="#t-pencil"/></svg></span>
</div>
<div class="tabs"><span class="tab"><svg class="ic"><use href="#t-sel"/></svg>Overview</span></div>
<div class="work">
<div class="palette">
<div class="pal-top"><svg class="ic"><use href="#t-link"/></svg></div>
<div class="pal-grid">
<span class="p y"><svg class="ic"><use href="#p-c"/></svg></span><span class="p tan"><svg class="ic"><use href="#p-bat"/></svg></span>
<span class="p y"><svg class="ic"><use href="#p-cc"/></svg></span><span class="p yel"><svg class="ic"><use href="#p-evt"/></svg></span>
<span class="p y"><svg class="ic"><use href="#p-r"/></svg></span><span class="p blu"><svg class="ic"><use href="#p-arr"/></svg></span>
<span class="p y"><svg class="ic"><use href="#p-rr"/></svg></span><span class="p grn"><svg class="ic"><use href="#p-pc"/></svg></span>
<span class="p y"><svg class="ic"><use href="#p-rt"/></svg></span><span class="p"><svg class="ic"><use href="#p-g"/></svg></span>
<span class="p y"><svg class="ic"><use href="#p-rd"/></svg></span><span class="p"><svg class="ic"><use href="#p-gp"/></svg></span>
<span class="p y"><svg class="ic"><use href="#p-d"/></svg></span><span class="p"><svg class="ic"><use href="#p-ge"/></svg></span>
<span class="p y"><svg class="ic"><use href="#p-dx"/></svg></span><span class="p"><svg class="ic"><use href="#p-gz"/></svg></span>
<span class="p y"><svg class="ic"><use href="#p-do"/></svg></span><span class="p"><svg class="ic"><use href="#p-fem"/></svg></span>
<span class="p y"><svg class="ic"><use href="#p-dp"/></svg></span><span class="p"><svg class="ic"><use href="#p-rob"/></svg></span>
<span class="p t-reg">T</span><span class="p"><svg class="ic"><use href="#p-sku"/></svg></span>
<span class="p t-big">T</span><span class="p"><svg class="ic"><use href="#p-off"/></svg></span>
<span class="p"><svg class="ic"><use href="#p-tbl"/></svg></span><span class="p url"><span class="url-t">URL</span><svg class="url-a"><use href="#p-arrowline"/></svg></span>
<span class="p"><svg class="ic"><use href="#p-cog"/></svg></span><span class="p"><svg class="ic"><use href="#p-pill"/></svg></span>
<span class="p"><svg class="ic"><use href="#p-db"/></svg></span><span class="p"><svg class="ic"><use href="#p-book"/></svg></span>
</div>
</div>
<div class="view">
<div class="canvas"><svg class="diagram">
<rect width="100%" height="100%" fill="#fff"/><rect width="100%" height="100%" fill="url(#grid)"/>
<g transform="translate(-790 -564)">
<rect class="grp" x="956.500" y="595.500" width="51" height="21"/><rect class="grp" x="956.500" y="616.500" width="920" height="106"/>
<rect class="grp" x="956.500" y="755.500" width="54" height="20"/><rect class="grp" x="956.500" y="775.500" width="920" height="260"/>
<rect class="tanc" x="973.500" y="647.500" width="80" height="51"/>
<rect class="tanc" x="1198.500" y="647.500" width="80" height="51" rx="5"/>
<rect class="tanc" x="1298.500" y="647.500" width="80" height="51" rx="5"/>
<rect class="tanc" x="1398.500" y="647.500" width="80" height="51" rx="5"/>
<use href="#p-bat" x="1031" y="651" width="16" height="16"/><use href="#a-stair" x="1256" y="651" width="16" height="16"/><use href="#a-target" x="1356" y="651" width="16" height="16"/><use href="#a-chev" x="1456" y="651" width="16" height="16"/>
<rect class="yelc" x="972.500" y="804.500" width="80" height="51"/><path class="yell" d="M972.500 813.500h80"/>
<path class="yelc" d="M1072.500 804.500h80v51l-21-7-40 13-19-6z"/><path class="yell" d="M1072.500 813.500h80"/>
<rect class="yelc" x="1197.500" y="804.500" width="80" height="51" rx="5"/><rect class="yelc" x="1297.500" y="804.500" width="80" height="51" rx="5"/><rect class="yelc" x="1397.500" y="804.500" width="80" height="51" rx="5"/>
<rect class="yelc" x="1522.500" y="804.500" width="80" height="51"/><rect class="yelc" x="1622.500" y="804.500" width="80" height="51"/>
<use href="#a-pill" x="1255" y="808" width="16" height="16"/><use href="#a-func" x="1355" y="808" width="16" height="16"/><use href="#p-arr" x="1455" y="808" width="16" height="16"/><use href="#a-role" x="1579" y="808" width="18" height="16"/><use href="#a-actor" x="1680" y="808" width="16" height="16"/>
<rect class="yelc" x="972.500" y="904.500" width="80" height="51"/><path class="yell" d="M972.500 913.500h80M972.500 945.500h80"/>
<rect class="yelc" x="1072.500" y="904.500" width="80" height="51"/><path class="yell" d="M1072.500 913.500h40v-9"/>
<rect class="yelc" x="1197.500" y="904.500" width="80" height="51" rx="5"/><rect class="yelc" x="1297.500" y="904.500" width="80" height="51" rx="5"/>
<rect class="yelc" x="1522.500" y="904.500" width="80" height="51"/><rect class="yelc" x="1622.500" y="904.500" width="80" height="51"/>
<use href="#p-evt" x="1255" y="908" width="16" height="16"/><use href="#a-int" x="1355" y="908" width="16" height="16"/><use href="#a-coll" x="1581" y="908" width="16" height="16"/><use href="#a-iface" x="1680" y="908" width="16" height="16"/>
<path class="hint" d="M963 622l45 44M1189 622l45 44M1288 622l45 44M1388 622l45 44M962 779l45 44M1062 779l45 44M1188 779l45 44M1288 779l45 44M1387 779l45 44M1512 779l45 44M1612 779l45 44M962 879l45 44M1062 879l45 44M1188 879l45 44M1288 879l45 44M1512 879l45 44M1612 879l45 44"/>
<text class="lbl" x="961" y="609">Strategy</text><text class="lbl" x="961" y="768">Business</text>
<text class="lbl" x="963" y="634">Resource</text><text class="lbl" x="1189" y="634">Capability</text><text class="lbl" x="1288" y="634">Course of Action</text><text class="lbl" x="1388" y="634">Value Stream</text>
<text class="lblb" x="1060" y="734">Passive</text><text class="lblb" x="1312" y="734">Behavioral</text><text class="lblb" x="1638" y="734">Active</text>
<text class="lbl" x="962" y="791">Object</text><text class="lbl" x="1062" y="791">Representation</text><text class="lbl" x="1188" y="791">Service</text><text class="lbl" x="1288" y="791">Function</text><text class="lbl" x="1387" y="791">Process</text><text class="lbl" x="1512" y="791">Role</text><text class="lbl" x="1612" y="791">Actor</text>
<text class="lbl" x="962" y="891">Contract</text><text class="lbl" x="1062" y="891">Product</text><text class="lbl" x="1188" y="891">Event</text><text class="lbl" x="1288" y="891">Interaction</text><text class="lbl" x="1512" y="891">Collboration</text><text class="lbl" x="1612" y="891">Interface</text>
</g></svg></div>
<div class="vs"><span class="sb-b"><i class="tri-u"></i></span><span class="thumb-v thumb-24"></span><span class="track"></span><span class="sb-b"><i class="tri-d"></i></span></div>
<div class="hs"><span class="sb-b"><i class="tri-l"></i></span><span class="thumb thumb-127"></span><span class="track"></span><span class="sb-b"><i class="tri-rb"></i></span></div>
<div class="corner"></div>
</div>
</div>
</div>
</section>

</main>
</body>
</html>
```

FILE: styles.css
```css
* { box-sizing: border-box; }
html { height: 100%; overflow: hidden; }
body {
  margin: 0;
  height: 1029px;
  overflow: hidden;
  display: flex;
  flex-direction: column;
  background: #a6a6a6;
  font-family: "Liberation Sans", Arial, sans-serif;
  font-size: 12px;
  color: #000;
}
.defs { position: absolute; width: 0; height: 0; }
.ic { width: 16px; height: 16px; display: block; flex: none; }
i { font-style: normal; }

/* main frame */
.app-title {
  height: 23px;
  flex: none;
  background: #0078d7;
  color: #fff;
  display: flex;
  align-items: center;
  padding-left: 3px;
  font-family: "Open Sans", "Liberation Sans", sans-serif;
  font-size: 11.800px;
}
.app-logo { margin-right: 4px; }
.app-name { margin-right: auto; }
.sys { width: 46px; height: 23px; display: block; flex: none; }
.sys svg { width: 46px; height: 23px; display: block; }
.sys:last-child { margin-right: 1px; }
.menu {
  height: 18px;
  flex: none;
  background: #fff;
  display: flex;
  align-items: center;
  gap: 15px;
  padding-left: 7px;
  font-size: 11.800px;
}
.main-tb {
  height: 42px;
  flex: none;
  margin-top: 2px;
  background: #efefef;
  border-top: 1px solid #fff;
  border-bottom: 2px solid #777;
  border-right: 1px solid #777;
  display: flex;
  align-items: center;
  gap: 6px;
  padding-left: 6px;
}
.grip {
  width: 13px;
  height: 34px;
  background: #efefef;
  border: 1px solid #fff;
  border-right: 2px solid #888;
  border-bottom: 2px solid #888;
  display: flex;
  align-items: center;
  justify-content: center;
}
.tri-r { width: 0; height: 0; border-left: 5px solid #999; border-top: 4px solid transparent; border-bottom: 4px solid transparent; }

/* buttons */
.btn {
  width: 22px;
  height: 22px;
  flex: none;
  background: #efefef;
  border: 1px solid #fff;
  border-right: 2px solid #777;
  border-bottom: 2px solid #777;
  display: flex;
  align-items: center;
  justify-content: center;
}
.btn-on { width: 24px; height: 24px; border: 2px solid #fff; border-top-color: #777; border-left-color: #777; margin-right: 1px; }
.btn-n { width: 21px; margin-right: 0; }
.btn-h { margin-right: 2px; }
.btn-p { width: 22px; margin-right: 0; }
.btn-w { width: 24px; height: 24px; }
.dim .ic { opacity: .45; }
.sep { width: 2px; height: 22px; flex: none; background: #b5b5b5; border-right: 1px solid #fff; margin: 0 1px; display: block; }
.sep-a { width: 1px; border: 0; height: 24px; margin: 0 6px 0 3px; }
.sep-b { width: 1px; border: 0; height: 24px; margin: 0 5px 0 2px; }
.sep-end { margin-left: auto; }

/* desktop + mdi windows */
.desktop { position: relative; flex: 1; }
.win {
  position: absolute;
  display: flex;
  flex-direction: column;
  background: #f7f7f7;
  border: 1px solid #e6e6e6;
  border-right: 2px solid #666;
  border-bottom: 2px solid #666;
  overflow: hidden;
}
.win-browse { left: 53px; top: 47px; width: 700px; height: 460px; }
.win-bpmn { left: 12px; top: 409px; width: 1117px; height: 520px; }
.win-custom { left: 562px; top: 29px; width: 1280px; height: 784px; }
.win-samples { left: 728px; top: 389px; width: 1115px; height: 520px; }
.win-title {
  height: 23px;
  flex: none;
  background: #efefef;
  color: #7f7f7f;
  display: flex;
  align-items: center;
  gap: 1px;
  padding-left: 3px;
  font-size: 11px;
  letter-spacing: -.15px;
}
.win-title.on { background: #0078d7; color: #fff; }
.wbtns { margin-left: auto; display: flex; gap: 3px; padding-right: 2px; }
.wb {
  width: 18px;
  height: 18px;
  background: #efefef;
  border: 1px solid #fff;
  border-right: 2px solid #999;
  border-bottom: 2px solid #999;
  color: #000;
  font-size: 12px;
  line-height: 14px;
  text-align: center;
  display: flex;
  align-items: center;
  justify-content: center;
}
.wmax { width: 10px; height: 11px; border: 1px solid #000; border-top-width: 2px; display: block; }
.win-body {
  flex: 1;
  min-height: 0;
  display: flex;
  flex-direction: column;
  border-top: 2px solid #808080;
  border-left: 2px solid #808080;
  padding: 3px 10px 9px 3px;
  background: #f9f9f9;
}
.tb {
  height: 32px;
  flex: none;
  margin-right: -3px;
  background: #efefef;
  border-top: 1px solid #fff;
  border-bottom: 2px solid #808080;
  border-right: 1px solid #999;
  display: flex;
  align-items: center;
  gap: 4px;
  padding-left: 4px;
  padding-right: 3px;
}
.tabs { height: 29px; flex: none; background: #efefef; padding-top: 3px; border-bottom: 1px solid #e0e0e0; }
.tab {
  height: 24px;
  width: 80px;
  background: #f8f8f8;
  border-top: 1px solid #fff;
  border-left: 1px solid #fff;
  border-right: 1px solid #ddd;
  display: flex;
  align-items: center;
  gap: 3px;
  padding-left: 5px;
  font-size: 11.600px;
}
.work { flex: 1; min-height: 0; display: flex; margin-left: 1px; }

/* palette */
.palette {
  width: 55px;
  flex: none;
  background: #efefef;
  border-left: 1px solid #888;
  border-right: 2px solid #888;
  border-top: 1px solid #aaa;
}
.pal-top { height: 23px; background: #fff; border: 1px solid #aaa; border-right-color: #ddd; border-bottom-color: #ddd; display: flex; align-items: center; justify-content: center; }
.pal-grid { display: grid; grid-template-columns: 25px 26px; grid-template-rows: repeat(4, 27px) repeat(11, 24px); }
.p {
  background: #efefef;
  border: 1px solid #f8f8f8;
  border-right: 2px solid #777;
  border-bottom: 2px solid #777;
  display: flex;
  align-items: center;
  justify-content: center;
}
.p.y { background: #ffffee; border-color: #000; border-top: 0; border-left: 0; }
.p.tan { background: #f5e1b5; border-color: #000; border-top: 0; border-left: 0; }
.p.yel { background: #f5f5b0; border-color: #000; border-top: 0; border-left: 0; }
.p.blu { background: #b0dce8; border-color: #000; border-top: 0; border-left: 0; }
.p.grn { background: #c8f8c8; border-color: #000; border-top: 0; border-left: 0; }
.t-reg { font: bold 13px "Liberation Serif", serif; }
.t-big { font: bold 17px "Liberation Serif", serif; }
.url { flex-direction: column; gap: 1px; color: #000080; }
.url-t { font-size: 10px; line-height: 9px; text-decoration: underline; }
.url-a { width: 16px; height: 5px; display: block; }

/* viewport with scrollbars */
.view {
  flex: 1;
  min-width: 0;
  display: grid;
  grid-template-columns: minmax(0, 1fr) 17px;
  grid-template-rows: minmax(0, 1fr) 17px;
  background: #efefef;
}
.canvas { position: relative; overflow: hidden; background: #fff; box-shadow: inset 0 1px #999; }
.diagram { display: block; width: 100%; height: 100%; }
.gridback { position: absolute; left: 0; top: 0; width: 100%; height: 100%; }
.minor path { stroke: #d8d8d8; stroke-dasharray: 4 3.500; fill: none; }
.major path { stroke: #a8a8a8; stroke-dasharray: 4 3.500; fill: none; }
.vs, .hs { display: flex; background: #efefef; }
.vs { flex-direction: column; }
.sb-b {
  width: 17px;
  height: 17px;
  flex: none;
  background: #efefef;
  border: 1px solid #fff;
  border-right: 2px solid #777;
  border-bottom: 2px solid #777;
  display: flex;
  align-items: center;
  justify-content: center;
}
.track { flex: 1; background: repeating-conic-gradient(#e6e6e6 0 25%, #fbfbfb 0 50%) 0 0 / 2px 2px; }
.gap-23 { flex: 0 0 23px; }
.thumb, .thumb-v { flex: none; background: #efefef; border: 1px solid #fff; border-right: 2px solid #777; border-bottom: 2px solid #777; }
.thumb-127 { width: 127px; }
.thumb-500 { width: 500px; }
.thumb-68 { height: 68px; }
.thumb-24 { height: 24px; }
.corner { background: #efefef; }
.tri-u, .tri-d, .tri-l, .tri-rb { width: 0; height: 0; display: block; border: 4px solid transparent; }
.tri-u { border-bottom: 5px solid #000; border-top: 0; }
.tri-d { border-top: 5px solid #000; border-bottom: 0; }
.tri-l { border-right: 5px solid #000; border-left: 0; }
.tri-rb { border-left: 5px solid #000; border-right: 0; }

/* cards (custom samples model) */
.cards {
  position: relative;
  display: grid;
  grid-template-columns: repeat(13, 51px);
  grid-auto-rows: 51px;
  gap: 24px;
  padding: 60px 0 0 79px;
}
.card {
  background: #ffffee;
  border: 1px solid #72849a;
  display: flex;
  align-items: center;
  justify-content: center;
}
.chev { font-size: 15px; font-weight: bold; padding-bottom: 2px; }
.cell-skip { display: contents; }
.cards > .cell-skip + .card { grid-column: 1; }

.cal-t { font: bold 8px "DejaVu Sans Mono", monospace; text-anchor: middle; fill: #222; }
.badge-t { font: bold 12px "Liberation Sans", sans-serif; text-anchor: middle; fill: #fff; }
.badge-i { font: bold 11px "Liberation Serif", serif; text-anchor: middle; fill: #1f5a96; }

/* diagrams */
.lane-g { fill: #d5ff90; stroke: #bfe07a; stroke-dasharray: 10 4; }
.lane-r { fill: #fde2e2; stroke: #e6c8c8; stroke-dasharray: 10 4; }
.task { fill: #ffffee; stroke: #7b8a9b; }
.start { fill: #ffffee; stroke: #00ff00; stroke-width: 2; }
.end-o { fill: #fff; stroke: #ff0000; stroke-width: 2; }
.end-i { fill: #ff0000; }
.xmark { stroke: #7b8a9b; stroke-width: 3.500; fill: none; }
.conn { stroke: #7b8a9b; fill: none; }
.head { fill: #7b8a9b; }
.hint { stroke: #7b8a9b; stroke-dasharray: 3 7; fill: none; }
.lbl { font: 12.500px "Liberation Sans", sans-serif; fill: #7f8d9c; }
.lblb { font: bold 12.500px "Liberation Sans", sans-serif; fill: #7b8a9b; }
.grp { fill: #ffffee; stroke: #7b8a9b; stroke-width: 2; stroke-dasharray: 6 3; }
.tanc { fill: #f6e2b7; stroke: #d9c48f; }
.yelc { fill: #f6f5b4; stroke: #dcd68c; }
.yell { fill: none; stroke: #dcd68c; }

/* file browser */
.tb-browse { height: 28px; margin: 1px -3px 3px 0; }
.field { height: 18px; flex: none; background: #fff; border-top: 1px solid #aaa; border-left: 1px solid #aaa; margin-bottom: 3px; }
.files { border-collapse: collapse; table-layout: fixed; width: 540px; flex: none; background: #fff; margin-left: 2px; }
.c-name { width: 281px; }
.c-type { width: 58px; }
.c-size { width: 50px; }
.c-date { width: 151px; }
.files th {
  height: 20px;
  padding: 0 0 0 6px;
  font-weight: normal;
  font-size: 12px;
  text-align: left;
  background: #efefef;
  border-top: 1px solid #fff;
  border-left: 1px solid #fff;
  border-right: 2px solid #777;
  border-bottom: 2px solid #777;
}
.th-name { display: flex; align-items: center; justify-content: space-between; padding-right: 5px; }
.sort { width: 0; height: 0; border: 4px solid transparent; border-top: 0; border-bottom: 5px solid #aaa; }
.files td {
  height: 19px;
  padding: 0 0 0 6px;
  font: 11.600px/19px "Liberation Mono", monospace;
  white-space: nowrap;
  overflow: hidden;
}
.files td:first-child { padding-left: 0; }
.files td:last-child { padding-left: 7px; }
.alt td { background: #e6e6e6; }
.sel td { background: #0078d7; color: #fff; }
.nm { display: flex; align-items: center; height: 19px; }
.lv0 { padding-left: 7px; }
.lv1 { padding-left: 31px; }
.lv2 { padding-left: 21px; }
.tog {
  width: 9px;
  height: 9px;
  margin-right: 5px;
  border: 1px solid #333;
  background: linear-gradient(#000, #000) center / 5px 1px no-repeat #fff;
  flex: none;
}
.fi { width: 14px; height: 14px; margin-right: 5px; flex: none; }
```
